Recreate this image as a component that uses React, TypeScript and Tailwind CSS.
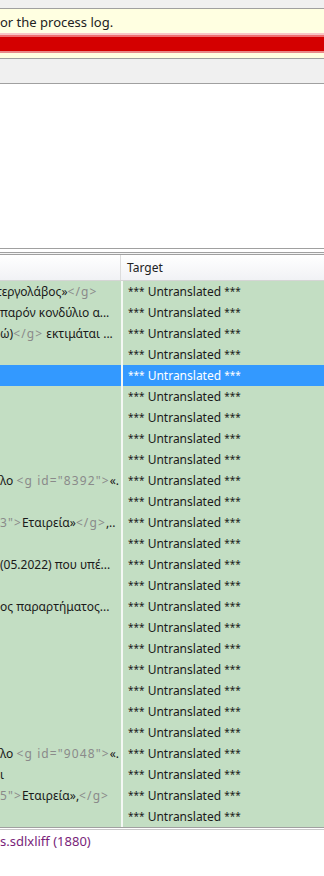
import type { ReactNode } from 'react';

type Row = { source: ReactNode; selected?: boolean };

// inline tag markers in the source column
const Tag = ({ children }: { children: ReactNode }) => (
  <span className="text-[#8a8a8a] tracking-[1.1px]">{children}</span>
);

const rows: Row[] = [
  { source: <>τεργολάβος»<Tag>&lt;/g&gt;</Tag></> },
  { source: <>παρόν κονδύλιο α...</> },
  { source: <>ώ)<Tag>&lt;/g&gt;</Tag> εκτιμάται ...</> },
  { source: '' },
  { source: '', selected: true },
  { source: '' },
  { source: '' },
  { source: '' },
  { source: '' },
  { source: <>λο <Tag>&lt;g id="8392"&gt;</Tag>«.</> },
  { source: '' },
  { source: <><Tag>3"&gt;</Tag>Εταιρεία»<Tag>&lt;/g&gt;</Tag>,..</> },
  { source: '' },
  { source: <>(05.2022) που υπέ...</> },
  { source: '' },
  { source: <>ος παραρτήματος...</> },
  { source: '' },
  { source: '' },
  { source: '' },
  { source: '' },
  { source: '' },
  { source: '' },
  { source: <>λο <Tag>&lt;g id="9048"&gt;</Tag>«.</> },
  { source: <>ι</> },
  { source: <><Tag>5"&gt;</Tag>Εταιρεία»,<Tag>&lt;/g&gt;</Tag></> },
  { source: '' },
];

function Untranslated() {
  return (
    <span>
      <span className="text-[10px] align-[1px]">***</span> Untranslated{' '}
      <span className="text-[10px] align-[1px]">***</span>
    </span>
  );
}

export default function App() {
  return (
    <div
      className="w-[324px] h-[876px] overflow-hidden bg-white text-[12px] text-[#1a1a1a]"
      style={{ fontFamily: '"Noto Sans", "Open Sans", sans-serif' }}
    >
      {/* top chrome */}
      <div className="h-[9px] bg-[#f0f0f0] border-b border-[#a0a0a0]" />

      {/* info bar with progress */}
      <div className="h-[50px] bg-[#ffffe1] border-b border-[#a0a0a0] flex flex-col">
        <div className="h-[24px] flex items-end pb-[1px] whitespace-nowrap text-[13px] text-[#222]">
          or the process log.
        </div>
        <div className="h-[20px] flex flex-col">
          <div className="h-[2px] bg-[#f9c4c4]" />
          <div className="h-[2px] bg-[#ee7070]" />
          <div className="h-[14px] bg-[#d40000]" />
          <div className="h-[2px] bg-[#e98a8a]" />
        </div>
      </div>

      {/* toolbar */}
      <div className="h-[25px] bg-[#f0f0f0] border-b border-[#a0a0a0]" />

      {/* empty log panel */}
      <div className="h-[164px] bg-white" />

      {/* splitter lines */}
      <div className="h-[1px] bg-[#a0a0a0]" />
      <div className="h-[3px] bg-white" />
      <div className="h-[1px] bg-[#a0a0a0]" />
      <div className="h-[1px] bg-[#f4f4f4]" />
      <div className="h-[1px] bg-[#a0a0a0]" />

      {/* grid header */}
      <div className="h-[26px] flex bg-gradient-to-b from-[#ffffff] to-[#f1f2f5] border-b border-[#d5d5d5]">
        <div className="w-[121px] border-r border-[#dcdcdc]" />
        <div className="flex-1 flex items-center pl-[6px] text-[#222]">Target</div>
      </div>

      {/* rows */}
      <div className="flex flex-col">
        {rows.map((row, i) => (
          <div key={i} className="h-[21px] flex">
            <div
              className={`w-[121px] overflow-hidden whitespace-nowrap flex items-center ${
                row.selected ? 'bg-[#3399ff] text-white' : 'bg-[#c3dec3]'
              }`}
            >
              <span className={i === 0 ? '-ml-[4px]' : ''}>{row.source}</span>
            </div>
            <div className="w-[2px] bg-[#f4f8f4]" />
            <div
              className={`flex-1 flex items-center pl-[5px] whitespace-nowrap ${
                row.selected ? 'bg-[#3399ff] text-white' : 'bg-[#c3dec3]'
              }`}
            >
              <Untranslated />
            </div>
          </div>
        ))}
      </div>

      {/* bottom separator */}
      <div className="h-[1px] bg-[#a0a0a0]" />
      <div className="h-[1px] bg-white" />
      <div className="h-[1px] bg-[#c8c8c8]" />

      {/* status */}
      <div className="h-[24px] flex items-center whitespace-nowrap text-[#7a1f7a] text-[13px]">
        s.sdlxliff (1880)
      </div>
    </div>
  );
}
